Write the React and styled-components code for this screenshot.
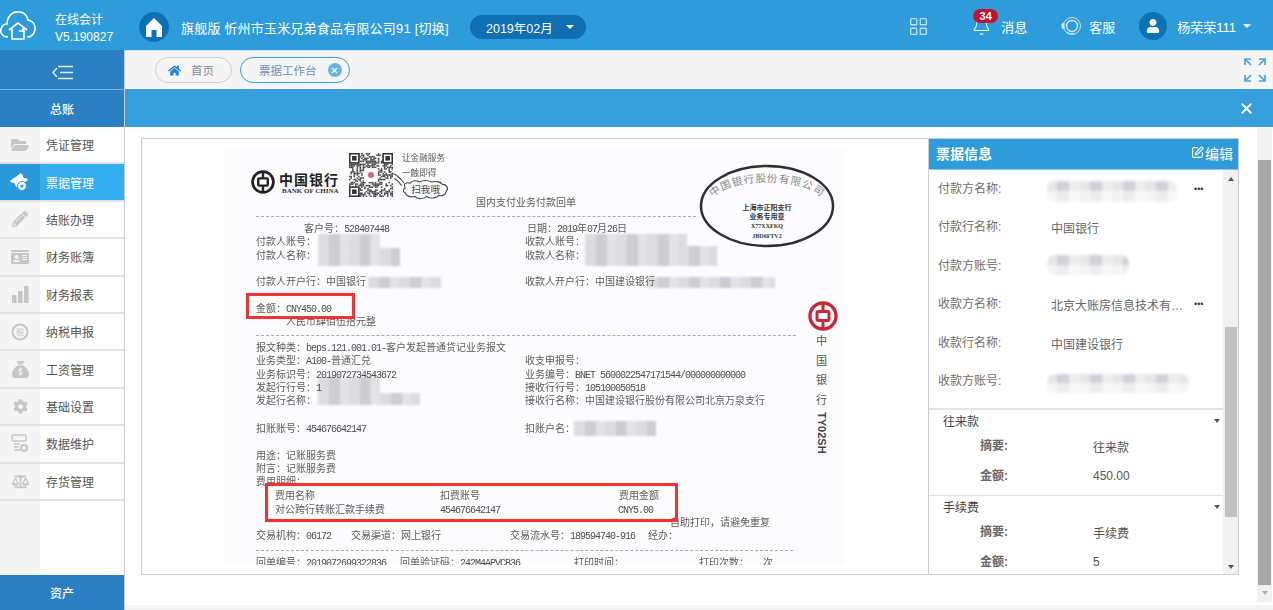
import React from "react";
import styled, { createGlobalStyle } from "styled-components";
import { Bell, LayoutGrid, SquarePen, X } from "lucide-react";
import {
  FaBalanceScale,
  FaCog,
  FaFolderOpen,
  FaHome,
  FaIdCard,
  FaPencilAlt,
  FaUser,
} from "react-icons/fa";
import { FaSackDollar } from "react-icons/fa6";

const GlobalStyle = createGlobalStyle`
  html, body {
    margin: 0;
    padding: 0;
    height: 100%;
    overflow: hidden;
    background: #fff;
  }
  * {
    box-sizing: border-box;
  }
  body {
    font-family: "Liberation Sans", "Noto Sans CJK SC", sans-serif;
    font-size: 12px;
  }
`;

const Page = styled.div`
  width: 1273px;
  height: 610px;
  display: flex;
  flex-direction: column;
  overflow: hidden;
`;

/* ---------- top bar ---------- */

const TopBar = styled.header`
  height: 50px;
  flex: none;
  display: flex;
  align-items: center;
  padding-top: 4px;
  background: #2e9cdb;
  color: #fff;
`;

const Brand = styled.div`
  width: 139px;
  height: 100%;
  display: flex;
  align-items: center;
  gap: 19px;
  padding-top: 3px;
`;

const CloudSlot = styled.span`
  display: flex;
  margin-bottom: 7px;
`;

const BrandText = styled.div`
  display: flex;
  flex-direction: column;
  gap: 3px;
  line-height: 14px;
  font-size: 12px;
`;

const RoundBadge = styled.span`
  width: ${(p) => p.$size}px;
  height: ${(p) => p.$size}px;
  flex: none;
  border-radius: 50%;
  background: #0d72b5;
  display: flex;
  align-items: center;
  justify-content: center;
`;

const CompanyName = styled.span`
  margin-left: 12px;
  width: 289px;
  font-size: 13px;
  letter-spacing: 0.2px;
  white-space: nowrap;
`;

const DatePill = styled.div`
  width: 116px;
  height: 24px;
  border-radius: 12px;
  background: #0f6fb2;
  display: flex;
  align-items: center;
  padding-left: 16px;
  font-size: 12.5px;
`;

const Caret = styled.i`
  display: block;
  width: 0;
  height: 0;
  margin-left: ${(p) => p.$left || 0}px;
  border-left: 4px solid transparent;
  border-right: 4px solid transparent;
  border-top: 4px solid #fff;
`;

const TopRight = styled.div`
  margin-left: auto;
  display: flex;
  align-items: center;
  padding-right: 22px;
  margin-bottom: 2px;
`;

const TopAction = styled.div`
  display: flex;
  align-items: center;
  font-size: 13px;
  margin-left: ${(p) => p.$left}px;
  gap: ${(p) => p.$gap || 0}px;
  position: relative;
`;

const CountBadge = styled.span`
  position: absolute;
  left: 1px;
  top: -8px;
  width: 25px;
  height: 14px;
  border-radius: 7px;
  background: #c5102f;
  font-size: 11px;
  line-height: 14px;
  font-weight: bold;
  text-align: center;
`;

/* ---------- body ---------- */

const Body = styled.div`
  flex: 1;
  display: flex;
  min-height: 0;
`;

const Sidebar = styled.aside`
  width: 125px;
  flex: none;
  display: flex;
  flex-direction: column;
  border-right: 1px solid #ccc;
  background: linear-gradient(90deg, #f5f5f5 40px, #fff 40px);
`;

const Collapse = styled.div`
  height: 40px;
  flex: none;
  background: #2b7fc3;
  border-bottom: 1px solid #7fb3dc;
  display: flex;
  align-items: center;
  justify-content: center;
  padding-top: 6px;
`;

const GroupTitle = styled.div`
  height: ${(p) => p.$h}px;
  flex: none;
  margin-top: ${(p) => (p.$end ? "auto" : 0)};
  background: #2b7fc3;
  color: #fff;
  font-size: 12px;
  font-weight: 500;
  display: flex;
  align-items: center;
  justify-content: center;
`;

const MenuItem = styled.div`
  height: 37.4px;
  flex: none;
  display: flex;
  align-items: center;
  border-bottom: 2px solid #e2e2e2;
  background: ${(p) => (p.$active ? "#35aeef" : "transparent")};
  color: ${(p) => (p.$active ? "#fff" : "#555")};
  font-size: 12px;
`;

const MenuIcon = styled.span`
  width: 40px;
  height: 100%;
  flex: none;
  margin-right: 6px;
  display: flex;
  align-items: center;
  justify-content: center;
  color: ${(p) => (p.$active ? "#fff" : "#c6c6c6")};
  background: ${(p) => (p.$active ? "#2a99da" : "transparent")};
`;

const Main = styled.main`
  flex: 1;
  min-width: 0;
  display: flex;
  flex-direction: column;
`;

const TabBar = styled.div`
  height: 39px;
  flex: none;
  background: #f5f5f5;
  border-top: 1px solid #c6e2f4;
  display: flex;
  align-items: center;
  gap: 8px;
  padding: 0 7px 0 30px;
`;

const Tab = styled.div`
  height: 26px;
  width: ${(p) => p.$w}px;
  border-radius: 13px;
  border: 1px solid ${(p) => (p.$active ? "#3a9fdc" : "#ccc")};
  color: ${(p) => (p.$active ? "#6a94ad" : "#8a8a8a")};
  display: flex;
  align-items: center;
  padding-left: ${(p) => (p.$active ? 18 : 12)}px;
  font-size: 11.5px;
`;

const TabHome = styled.span`
  display: flex;
  margin-right: 10px;
  color: #2a85c8;
`;

const TabClose = styled.span`
  width: 14px;
  height: 14px;
  margin-left: 11px;
  border-radius: 50%;
  background: #69b2e4;
  display: flex;
  align-items: center;
  justify-content: center;
`;

const ExpandButton = styled.span`
  margin-left: auto;
  display: flex;
`;

const BlueBar = styled.div`
  height: 38px;
  flex: none;
  background: #349fdb;
  display: flex;
  align-items: center;
  justify-content: flex-end;
  padding-right: 18px;
  color: #fff;
`;

const Content = styled.div`
  flex: 1;
  min-height: 0;
  margin-top: 1px;
  display: flex;
  padding-left: 16px;
  background: #fff;
`;

const Viewer = styled.section`
  width: 1098px;
  height: 437px;
  margin-top: 10px;
  flex: none;
  border: 1px solid #ccc;
  display: flex;
  overflow: hidden;
`;

const ImageArea = styled.div`
  flex: 1;
  min-width: 0;
  padding: 9px 0 0 83px;
  overflow: hidden;
`;

const PageScroll = styled.div`
  width: 15px;
  height: 474px;
  margin-left: 18px;
  flex: none;
  background: #f1f1f1;
  display: flex;
  flex-direction: column;
  align-items: center;
  padding-top: 32px;
`;

const PageThumb = styled.div`
  width: 13px;
  height: 425px;
  margin-bottom: 6px;
  background: #a8a8a8;
`;

const FooterBand = styled.div`
  height: 5px;
  flex: none;
  background: #f5f5f5;
`;

/* ---------- scanned receipt, a free canvas: page coordinates minus the sheet origin ---------- */

const Sheet = styled.div`
  position: relative;
  width: 620px;
  height: 417px;
  overflow: hidden;
  background: #fcfcfe;
  font-family: "Liberation Serif", "Noto Sans CJK SC", serif;
  font-size: 10px;
  color: #5b5b5b;
`;

const Print = styled.span`
  position: absolute;
  left: ${(p) => p.$x - 225}px;
  top: ${(p) => p.$y - 155}px;
  line-height: 14px;
  white-space: nowrap;
  font-size: ${(p) => p.$size || 10}px;
  filter: blur(0.45px);
`;

/* half-width latin of the dot-matrix print: 5px a character */
const Latin = styled.span`
  font-family: "Liberation Mono", monospace;
  letter-spacing: -1px;
  color: #4d4d4d;
`;

const DashLine = styled.div`
  position: absolute;
  left: 31px;
  width: ${(p) => p.$w}px;
  top: ${(p) => p.$y - 148}px;
  border-top: 1px dashed #aaa;
`;

const Smear = styled.div`
  position: absolute;
  left: ${(p) => p.$x - 225}px;
  top: ${(p) => p.$y - 148}px;
  width: ${(p) => p.$w}px;
  height: ${(p) => p.$h}px;
  background: repeating-linear-gradient(90deg, #dcdce0 0 11px, #cdcdd2 11px 22px, #e3e3e6 22px 31px);
  filter: blur(1px);
`;

const RedBox = styled.div`
  position: absolute;
  left: ${(p) => p.$x - 225}px;
  top: ${(p) => p.$y - 148}px;
  width: ${(p) => p.$w}px;
  height: ${(p) => p.$h}px;
  border: 3px solid #f33333;
`;

const Drawing = styled.svg`
  position: absolute;
  left: ${(p) => p.$x - 225}px;
  top: ${(p) => p.$y - 148}px;
  overflow: visible;
`;

const VerticalText = styled.div`
  position: absolute;
  left: ${(p) => p.$x - 225}px;
  top: ${(p) => p.$y - 148}px;
  writing-mode: vertical-rl;
  font-family: "Liberation Sans", sans-serif;
  font-size: 11px;
  font-weight: bold;
  color: #444;
`;

const BankChar = styled.span`
  position: absolute;
  left: 591px;
  top: ${(p) => p.$y - 155}px;
  line-height: 14px;
  font-size: 11px;
  color: #555;
`;

const BankName = styled.span`
  position: absolute;
  left: 54px;
  top: 23px;
  font-size: 14px;
  font-weight: bold;
  letter-spacing: 1px;
  color: #222;
  font-family: "Noto Sans CJK SC", sans-serif;
  line-height: 16px;
`;

const BankEnglish = styled.span`
  position: absolute;
  left: 57px;
  top: 39px;
  font-size: 7px;
  font-weight: bold;
  color: #333;
  line-height: 9px;
  white-space: nowrap;
`;

/* ---------- bill info panel ---------- */

const InfoPanel = styled.aside`
  width: 310px;
  flex: none;
  display: flex;
  flex-direction: column;
  border-left: 1px solid #ccc;
`;

const InfoHeader = styled.div`
  height: 31px;
  flex: none;
  background: #2e9cdb;
  color: #fff;
  display: flex;
  align-items: center;
  justify-content: space-between;
  padding: 0 5px 3px 7px;
  font-size: 14px;
  font-weight: bold;
  border-bottom: 1px solid #8cc6e8;
`;

const EditButton = styled.span`
  display: flex;
  align-items: center;
  gap: 1px;
  font-weight: normal;
`;

const InfoBody = styled.div`
  flex: 1;
  min-height: 0;
  display: flex;
`;

const InfoScroll = styled.div`
  flex: 1;
  min-width: 0;
  overflow: hidden;
`;

const FieldList = styled.div`
  height: 238px;
`;

const Field = styled.div`
  height: 38.4px;
  display: flex;
  align-items: flex-start;
  padding: 10px 0 0 9px;
  line-height: 18px;
`;

const FieldLabel = styled.span`
  width: 113px;
  flex: none;
  color: #6e6e6e;
`;

const FieldValue = styled.span`
  width: 132px;
  flex: none;
  margin-top: 2px;
  color: #666;
  white-space: nowrap;
`;

const FieldSmear = styled.div`
  width: ${(p) => p.$w}px;
  height: ${(p) => p.$h}px;
  margin: ${(p) => p.$top}px 0 0 -4px;
  background:
    linear-gradient(rgba(255, 255, 255, 0) 50%, rgba(255, 255, 255, 0.6) 50%),
    repeating-linear-gradient(90deg, #e6e6e8 0 10px, #d2d2d6 10px 22px, #ededee 22px 33px);
  border-radius: 8px;
  filter: blur(1.5px);
`;

const MoreDots = styled.span`
  margin: 3px 0 0 11px;
  color: #333;
  font-size: 9px;
  line-height: 12px;
`;

const EntrySection = styled.div`
  border-top: ${(p) => (p.$first ? 2 : 1)}px solid #e2e2e2;
  padding: 0 3px 2px 14px;
  color: #555;
`;

const EntryTitle = styled.div`
  height: 23px;
  display: flex;
  align-items: center;
  justify-content: space-between;
  padding-bottom: 2px;
  font-size: 12px;
  color: #444;
`;

const EntryRow = styled.div`
  height: 26px;
  margin-bottom: 4px;
  display: flex;
  align-items: center;
  padding-left: 37px;
`;

const EntryLabel = styled.span`
  width: 113px;
  flex: none;
  font-weight: bold;
  color: #666;
  margin-top: -4px;
`;

const Scrollbar = styled.div`
  width: 15px;
  flex: none;
  background: #f1f1f1;
  display: flex;
  flex-direction: column;
  align-items: center;
  padding-top: 7px;
`;

const ArrowUp = styled.i`
  display: block;
  width: 0;
  height: 0;
  border-left: 3px solid transparent;
  border-right: 3px solid transparent;
  border-bottom: 4px solid #555;
`;

const ArrowDown = styled.i`
  display: block;
  width: 0;
  height: 0;
  margin-top: ${(p) => p.$top || 0}px;
  border-left: 3px solid transparent;
  border-right: 3px solid transparent;
  border-top: 4px solid ${(p) => p.$color || "#555"};
`;

const Thumb = styled.div`
  width: 12px;
  height: 190px;
  margin-top: 146px;
  background: #c1c1c1;
`;

/* ---------- data ---------- */

const prints = [
  ["让金融服务", 402, 158, 8.6],
  ["一触即得", 402, 173, 8.6],
  ["国内支付业务付款回单", 476, 203],
  ["客户号：528407448", 304, 229],
  ["付款人账号：", 256, 242],
  ["付款人名称：", 256, 256],
  ["付款人开户行：中国银行", 256, 282],
  ["金额：CNY450.00", 256, 309],
  ["人民币肆佰伍拾元整", 286, 322],
  ["报文种类：beps.121.001.01-客户发起普通贷记业务报文", 256, 348],
  ["业务类型：A100-普通汇兑", 256, 361],
  ["业务标识号：2019072734543672", 256, 375],
  ["发起行行号：1", 256, 388],
  ["发起行名称：", 256, 401],
  ["扣账账号：454676642147", 256, 429],
  ["用途：记账服务费", 256, 456],
  ["附言：记账服务费", 256, 469],
  ["费用明细：", 256, 482],
  ["费用名称", 275, 496],
  ["扣费账号", 440, 496],
  ["费用金额", 619, 496],
  ["对公跨行转账汇款手续费", 275, 510],
  ["454676642147", 440, 510],
  ["CNY5.00", 618, 510],
  ["自助打印，请避免重复", 670, 523],
  ["交易机构：06172", 256, 536],
  ["交易渠道：网上银行", 351, 536],
  ["交易流水号：189594740-916", 510, 536],
  ["经办：", 648, 536],
  ["回单编号：2019072699322836", 256, 563],
  ["回单验证码：242M4APVCB36", 400, 563],
  ["打印时间：", 574, 563],
  ["打印次数：", 699, 563],
  ["次", 763, 563],
  ["日期：2019年07月26日", 527, 229],
  ["收款人账号：", 525, 242],
  ["收款人名称：", 525, 256],
  ["收款人开户行：中国建设银行", 525, 282],
  ["收支申报号：", 525, 361],
  ["业务编号：BNET 5600022547171544/000000000000", 525, 375],
  ["接收行行号：105100050518", 525, 388],
  ["接收行名称：中国建设银行股份有限公司北京万泉支行", 525, 401],
  ["扣账户名：", 525, 429],
];

const smears = [
  [318, 234, 62, 16],
  [318, 248, 82, 18],
  [368, 277, 73, 11],
  [585, 234, 102, 16],
  [585, 246, 132, 20],
  [647, 277, 128, 11],
  [318, 377, 62, 18],
  [318, 393, 102, 12],
  [574, 421, 82, 15],
];

const menu = [
  ["凭证管理", <FaFolderOpen size={18} />],
  ["票据管理", <TicketIcon />],
  ["结账办理", <FaPencilAlt size={16} />],
  ["财务账簿", <FaIdCard size={18} />],
  ["财务报表", <BarsIcon />],
  ["纳税申报", <TaxIcon />],
  ["工资管理", <FaSackDollar size={17} />],
  ["基础设置", <FaCog size={15} />],
  ["数据维护", <DataIcon />],
  ["存货管理", <FaBalanceScale size={17} />],
];

// split a printed line so that its latin runs take the half-width font
function printed(text) {
  return text.split(/([\x20-\x7e]+)/).map((part, i) =>
    i % 2 ? <Latin key={i}>{part}</Latin> : part
  );
}

/* ---------- drawings ---------- */

function TicketIcon() {
  return (
    <svg width="22" height="20" viewBox="0 0 22 20" fill="#fff">
      <path d="M1 9 L12 1 L14 4 a2 2 0 0 0 3 2 L19 8 L10 14 L7 15 L6 12 a2 2 0 0 0 -3 -1 Z" />
      <circle cx="13" cy="14" r="4.5" stroke="#2a99da" strokeWidth="1" />
      <circle cx="13" cy="14" r="1.6" fill="#2a99da" />
    </svg>
  );
}

function BarsIcon() {
  return (
    <svg width="17" height="18" viewBox="0 0 17 18" fill="currentColor">
      <rect x="0" y="10" width="4.5" height="8" />
      <rect x="6" y="6" width="4.5" height="12" />
      <rect x="12" y="1" width="4.5" height="17" />
    </svg>
  );
}

function TaxIcon() {
  return (
    <svg width="18" height="18" viewBox="0 0 18 18">
      <circle cx="9" cy="9" r="7.5" fill="none" stroke="currentColor" strokeWidth="2" />
      <text x="9" y="12" fontSize="8" textAnchor="middle" fill="currentColor">税</text>
    </svg>
  );
}

function DataIcon() {
  return (
    <svg width="18" height="19" viewBox="0 0 18 19" fill="none" stroke="currentColor" strokeWidth="1.5">
      <rect x="1" y="1" width="14" height="6" rx="1" />
      <path d="M3 10h6M3 13h5M3 16h6" />
      <circle cx="13" cy="14" r="3" strokeWidth="2.2" />
    </svg>
  );
}

function CloudLogo() {
  return (
    <svg width="36" height="32" viewBox="0 0 36 32" fill="none" stroke="#fff" strokeWidth="1.6">
      <path d="M8 28 C2 28 0 23 1 20 C2 16 5 15 7 15 C7 8 12 2 19 3 C24 3 27 7 28 11 C33 12 35.5 16 35 21 C34 25 31 28 27 28" />
      <path d="M9 21 L18 14 L27 21 M12 19 V30 H24 V19" />
      <path d="M19 22 h4 v-3" />
    </svg>
  );
}

function HouseIcon() {
  return (
    <svg width="16" height="19" viewBox="0 0 16 19" fill="#fff">
      <path d="M8 0 L16 8 V19 H10.5 V12 H5.5 V19 H0 V8 Z" />
    </svg>
  );
}

function HeadsetIcon() {
  return (
    <svg width="20" height="20" viewBox="0 0 20 20" fill="none" stroke="#cfe8f7">
      <circle cx="11" cy="10" r="8.5" strokeWidth="1" />
      <circle cx="11" cy="10" r="5.5" strokeWidth="1.4" />
      <path d="M1 8 L3 7 V13 L1 12 Z" fill="#cfe8f7" />
      <path d="M6 16 C8 18 11 18 13 17" strokeWidth="1" />
    </svg>
  );
}

function ExpandIcon() {
  return (
    <svg width="22" height="24" viewBox="0 0 22 24" fill="none" stroke="#4a9ef0" strokeWidth="1.7">
      <path d="M1 7 V1 H7 M1 1 L7 7" />
      <path d="M15 1 H21 V7 M21 1 L15 7" />
      <path d="M1 17 V23 H7 M1 23 L7 17" />
      <path d="M15 23 H21 V17 M21 23 L15 17" />
    </svg>
  );
}

function CollapseIcon() {
  return (
    <svg width="21" height="15" viewBox="0 0 21 15" fill="none" stroke="#e4f1fa" strokeWidth="1.4">
      <path d="M5 3 L1 7.5 L5 12" />
      <path d="M6 1.5 H21 M8 7.5 H21 M6 13.5 H21" />
    </svg>
  );
}

function BankMark({ x, y, size, color }) {
  return (
    <Drawing $x={x} $y={y} width={size} height={size} viewBox="0 0 30 30" fill="none" stroke={color}>
      <circle cx="15" cy="15" r="13" strokeWidth="3.4" />
      <rect x="9" y="10.5" width="12" height="9" rx="1.5" strokeWidth="3" />
      <path d="M15 2 V10 M15 20 V28" strokeWidth="3" />
    </Drawing>
  );
}

function QrCode() {
  const n = 29;
  const cells = [];
  let seed = 7;
  for (let r = 0; r < n; r++) {
    for (let c = 0; c < n; c++) {
      seed = (seed * 1103515245 + 12345) & 0x7fffffff;
      if ((seed >> 16) % 100 < 52) {
        cells.push(<rect key={`${r}-${c}`} x={c} y={r} width="1" height="1" />);
      }
    }
  }
  const finder = (x, y) => (
    <g key={`${x}-${y}`}>
      <rect x={x} y={y} width="7" height="7" fill="#333" />
      <rect x={x + 1} y={y + 1} width="5" height="5" fill="#fff" />
      <rect x={x + 2} y={y + 2} width="3" height="3" fill="#333" />
    </g>
  );
  return (
    <Drawing $x={349} $y={153} width="44" height="44" viewBox="0 0 29 29" fill="#444">
      {cells}
      {finder(0, 0)}
      {finder(22, 0)}
      {finder(0, 22)}
      <rect x="10" y="10" width="9" height="9" fill="#fff" />
      <circle cx="14.5" cy="14.5" r="2" fill="#d8667a" />
    </Drawing>
  );
}

function Stamp() {
  return (
    <Drawing $x={699} $y={164} width="136" height="84" viewBox="0 0 136 84" fill="#444">
      <ellipse cx="68" cy="42" rx="66" ry="40" fill="#fcfcfe" stroke="#2d2d33" strokeWidth="2.5" />
      <path id="stamp-arc" d="M 10 42 A 58 24 0 0 1 126 42" fill="none" />
      <text fontSize="10.5" letterSpacing="1" fill="#888">
        <textPath href="#stamp-arc" startOffset="50%" textAnchor="middle">中国银行股份有限公司</textPath>
      </text>
      <g fontSize="7" fontWeight="bold" textAnchor="middle" fill="#333">
        <text x="68" y="46">上海市正阳支行</text>
        <text x="68" y="55">业务专用章</text>
        <text x="68" y="64" fontSize="6">X77XXFKQ</text>
        <text x="68" y="74" fontSize="6">JBD6FTV2</text>
      </g>
    </Drawing>
  );
}

function ScanCloud() {
  return (
    <Drawing $x={386} $y={170} width="72" height="36" viewBox="0 0 60 30" fill="none" stroke="#444" strokeWidth="0.9">
      <path d="M16 15 C14 11 17 10 20 11 C22 8 26 9 28 10 C32 8 36 9 38 10 C42 9 46 10 47 12 C50 12 53 15 50 18 C50 21 46 22 44 21 C42 24 36 24 34 22 C30 25 26 24 24 22 C20 23 16 21 16 19 C14 18 14 16 16 15 Z" />
      <path d="M6 3 C9 4 12 7 15 11 M7 7 C9 8 11 10 13 13" />
      <text x="33" y="19" fontSize="8" textAnchor="middle" fill="#444" stroke="none">扫我哦</text>
    </Drawing>
  );
}

function Receipt() {
  return (
    <Sheet>
      <BankMark x={251} y={170} size={24} color="#222" />
      <BankName>中国银行</BankName>
      <BankEnglish>BANK OF CHINA</BankEnglish>
      <QrCode />
      <ScanCloud />
      <DashLine $y={216} $w={440} />
      <DashLine $y={335} $w={540} />
      <DashLine $y={550} $w={537} />
      {smears.map(([x, y, w, h]) => (
        <Smear key={`${x}-${y}`} $x={x} $y={y} $w={w} $h={h} />
      ))}
      {prints.map(([text, x, y, size]) => (
        <Print key={`${x}-${y}`} $x={x} $y={y} $size={size}>{printed(text)}</Print>
      ))}
      <Stamp />
      <BankMark x={808} y={301} size={30} color="#c8283a" />
      <BankChar $y={341}>中</BankChar>
      <BankChar $y={361}>国</BankChar>
      <BankChar $y={380}>银</BankChar>
      <BankChar $y={400}>行</BankChar>
      <VerticalText $x={816} $y={412}>TY02SH</VerticalText>
      <RedBox $x={246} $y={293} $w={109} $h={26} />
      <RedBox $x={265} $y={483} $w={413} $h={39} />
    </Sheet>
  );
}

export default function App() {
  return (
    <>
      <GlobalStyle />
      <Page>
        <TopBar>
          <Brand>
            <CloudSlot>
              <CloudLogo />
            </CloudSlot>
            <BrandText>
              <span>在线会计</span>
              <span>V5.190827</span>
            </BrandText>
          </Brand>
          <RoundBadge $size={30}>
            <HouseIcon />
          </RoundBadge>
          <CompanyName>旗舰版 忻州市玉米兄弟食品有限公司91 [切换]</CompanyName>
          <DatePill>
            2019年02月
            <Caret $left={13} />
          </DatePill>
          <TopRight>
            <LayoutGrid size={21} color="#bfe0f5" strokeWidth={1.5} />
            <TopAction $left={43} $gap={10}>
              <CountBadge>34</CountBadge>
              <Bell size={19} color="#e6f3fb" strokeWidth={1.4} />
              消息
            </TopAction>
            <TopAction $left={34} $gap={8}>
              <HeadsetIcon />
              客服
            </TopAction>
            <TopAction $left={24} $gap={10}>
              <RoundBadge $size={28}>
                <FaUser size={14} color="#fff" />
              </RoundBadge>
              杨荣荣111
              <Caret $left={-3} />
            </TopAction>
          </TopRight>
        </TopBar>
        <Body>
          <Sidebar>
            <Collapse>
              <CollapseIcon />
            </Collapse>
            <GroupTitle $h={37}>总账</GroupTitle>
            {menu.map(([label, icon]) => {
              const active = label === "票据管理";
              return (
                <MenuItem key={label} $active={active}>
                  <MenuIcon $active={active}>{icon}</MenuIcon>
                  {label}
                </MenuItem>
              );
            })}
            <GroupTitle $h={35} $end>资产</GroupTitle>
          </Sidebar>
          <Main>
            <TabBar>
              <Tab $w={77}>
                <TabHome>
                  <FaHome size={13} />
                </TabHome>
                首页
              </Tab>
              <Tab $w={110} $active>
                票据工作台
                <TabClose>
                  <X size={9} color="#fff" strokeWidth={3} />
                </TabClose>
              </Tab>
              <ExpandButton>
                <ExpandIcon />
              </ExpandButton>
            </TabBar>
            <BlueBar>
              <X size={17} strokeWidth={2.6} />
            </BlueBar>
            <Content>
              <Viewer>
                <ImageArea>
                  <Receipt />
                </ImageArea>
                <InfoPanel>
                  <InfoHeader>
                    票据信息
                    <EditButton>
                      <SquarePen size={13} strokeWidth={2} />
                      编辑
                    </EditButton>
                  </InfoHeader>
                  <InfoBody>
                    <InfoScroll>
                      <FieldList>
                        <Field>
                          <FieldLabel>付款方名称:</FieldLabel>
                          <FieldValue><FieldSmear $w={130} $h={21} $top={-1} /></FieldValue>
                          <MoreDots>•••</MoreDots>
                        </Field>
                        <Field>
                          <FieldLabel>付款行名称:</FieldLabel>
                          <FieldValue>中国银行</FieldValue>
                        </Field>
                        <Field>
                          <FieldLabel>付款方账号:</FieldLabel>
                          <FieldValue><FieldSmear $w={82} $h={20} $top={-4} /></FieldValue>
                        </Field>
                        <Field>
                          <FieldLabel>收款方名称:</FieldLabel>
                          <FieldValue>北京大账房信息技术有…</FieldValue>
                          <MoreDots>•••</MoreDots>
                        </Field>
                        <Field>
                          <FieldLabel>收款行名称:</FieldLabel>
                          <FieldValue>中国建设银行</FieldValue>
                        </Field>
                        <Field>
                          <FieldLabel>收款方账号:</FieldLabel>
                          <FieldValue><FieldSmear $w={142} $h={19} $top={0} /></FieldValue>
                        </Field>
                      </FieldList>
                      <EntrySection $first>
                        <EntryTitle>
                          往来款
                          <ArrowDown />
                        </EntryTitle>
                        <EntryRow><EntryLabel>摘要:</EntryLabel>往来款</EntryRow>
                        <EntryRow><EntryLabel>金额:</EntryLabel>450.00</EntryRow>
                      </EntrySection>
                      <EntrySection>
                        <EntryTitle>
                          手续费
                          <ArrowDown />
                        </EntryTitle>
                        <EntryRow><EntryLabel>摘要:</EntryLabel>手续费</EntryRow>
                        <EntryRow><EntryLabel>金额:</EntryLabel>5</EntryRow>
                      </EntrySection>
                    </InfoScroll>
                    <Scrollbar>
                      <ArrowUp />
                      <Thumb />
                      <ArrowDown $top={48} />
                    </Scrollbar>
                  </InfoBody>
                </InfoPanel>
              </Viewer>
              <PageScroll>
                <PageThumb />
                <ArrowDown $color="#aaa" />
              </PageScroll>
            </Content>
            <FooterBand />
          </Main>
        </Body>
      </Page>
    </>
  );
}
